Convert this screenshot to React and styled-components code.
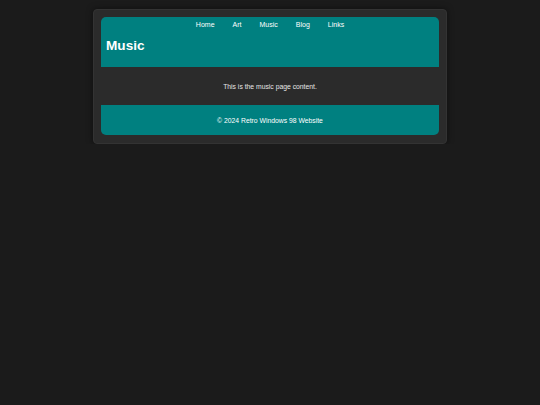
import React from "react";
import styled, { createGlobalStyle } from "styled-components";

const Global = createGlobalStyle`
  html, body { margin: 0; padding: 0; background: #1b1b1b; }
  body { font-family: "Liberation Sans", Arial, sans-serif; }
`;

const Window = styled.div`
  box-sizing: border-box;
  width: 354px;
  margin: 9px auto 0;
  padding: 7px 7px 8px;
  background: #2b2b2b;
  border: 1px solid #333333;
  border-radius: 4px;
  box-shadow: 0 0 6px rgba(0, 0, 0, 0.5);
`;

const Header = styled.header`
  height: 50px;
  background: #008080;
  border-radius: 5px 5px 0 0;
  display: flex;
  flex-direction: column;
`;

const Nav = styled.nav`
  display: flex;
  justify-content: center;
  gap: 18px;
  padding-top: 3px;
  height: 10px;
  line-height: 10px;
`;

const NavLink = styled.a`
  color: #ffffff;
  font-size: 7px;
  text-decoration: none;
`;

const Title = styled.h1`
  margin: 0;
  padding: 8px 0 0 5px;
  font-size: 13.6px;
  line-height: 16px;
  font-weight: bold;
  color: #ffffff;
`;

const Main = styled.main`
  height: 38px;
  display: flex;
  align-items: center;
  justify-content: center;
  color: #e6e6e6;
  font-size: 6.8px;
`;

const Footer = styled.footer`
  height: 30px;
  background: #008080;
  border-radius: 0 0 5px 5px;
  display: flex;
  align-items: center;
  justify-content: center;
  color: #ffffff;
  font-size: 6.8px;
`;

export default function App() {
  const links = ["Home", "Art", "Music", "Blog", "Links"];
  return (
    <>
      <Global />
      <Window>
        <Header>
          <Nav>
            {links.map((l) => (
              <NavLink key={l} href="#">{l}</NavLink>
            ))}
          </Nav>
          <Title>Music</Title>
        </Header>
        <Main>This is the music page content.</Main>
        <Footer>© 2024 Retro Windows 98 Website</Footer>
      </Window>
    </>
  );
}
